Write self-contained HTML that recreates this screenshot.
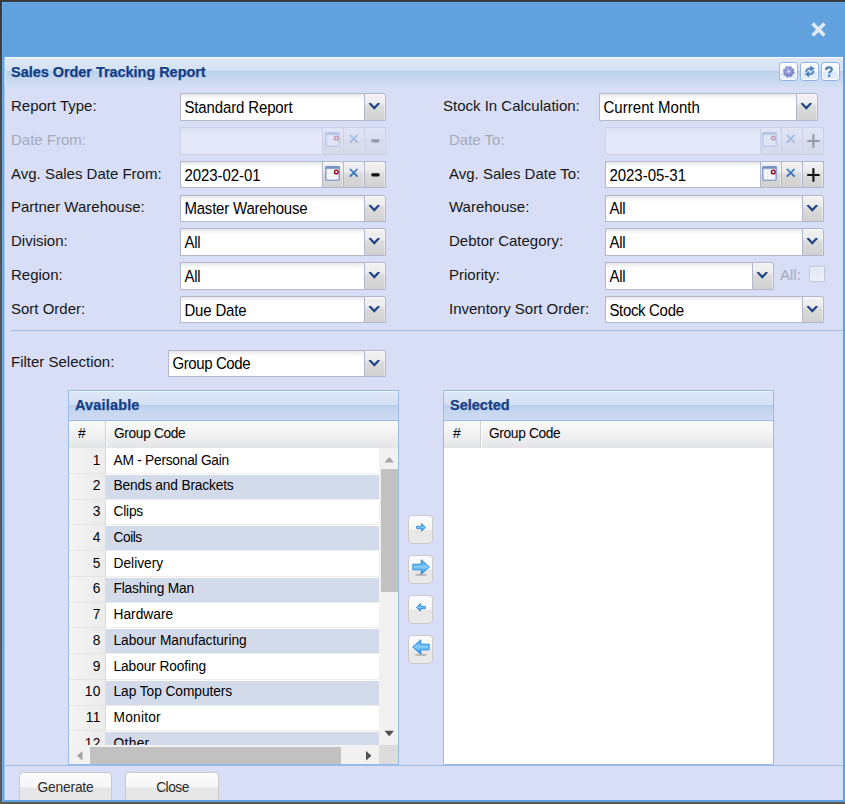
<!DOCTYPE html>
<html><head><meta charset="utf-8"><title>Sales Order Tracking Report</title>
<style>
*{box-sizing:border-box;margin:0;padding:0}
html,body{width:845px;height:804px;overflow:hidden;background:#3b3d40;font-family:"Liberation Sans",sans-serif;font-size:15px;color:#000}
#dark{position:absolute;left:0;top:0;width:845px;height:804px;background:linear-gradient(180deg,#37393c 0,#46484b 100px,#565757 300px,#5a5a58 100%)}
#win{position:absolute;left:2px;top:2px;width:843px;height:800px;background:#61a2de;border-top:1px solid #66abec;border-left:1px solid #66abec}
#bot{position:absolute;left:0;top:802px;width:845px;height:2px;background:#5a5a58}
#closex{position:absolute;left:811px;top:22px}
#panel{position:absolute;left:5px;top:57px;width:838px;height:743px;background:#d7def6;overflow:hidden;box-shadow:inset 1px 0 0 #dde3f8}
#phead{position:absolute;left:0;top:0;width:838px;height:30px;border-top:1px solid #fff;border-left:1px solid #dde7f6;background:linear-gradient(180deg,#dee8f6 0,#d4e1f3 13px,#b8cdec 13.2px,#c0d3ee 15px,#c8d8f0 22px,#d1dff3 29px)}
.ttl{position:absolute;font-weight:bold;color:#133e86;white-space:nowrap;font-size:14.5px;line-height:17px;-webkit-text-stroke:.25px #133e86}
.tool{position:absolute;top:4px;width:19px;height:19px;border:1px solid #8fb3e4;border-radius:3.5px;background:linear-gradient(180deg,#fdfeff 0,#f2f7fd 48%,#dbe9fa 52%,#e4effc 100%);box-shadow:inset 0 0 0 1px #fff}
.tool svg{position:absolute;left:0;top:0}
.lbl{position:absolute;white-space:nowrap;line-height:17px;font-size:15px;color:#161616}
.ldis{color:#a4aabb}
.fld{position:absolute;height:28px}
.h27,.h27 .inp,.h27 .trg{height:27px}
.inp{position:absolute;left:0;top:0;height:28px;border:1px solid #b5b8c8;background:linear-gradient(180deg,#e4e6e8 0,#f3f4f5 2.5px,#fdfdfd 5px,#fff 7px,#fff 100%);overflow:hidden;white-space:nowrap}
.inp span{position:absolute;left:3.4px;top:5px;line-height:17px;font-size:15px;color:#000;transform:scaleY(1.045);transform-origin:0 13.7px}
.trg{position:absolute;top:0;width:22px;height:28px;border:1px solid #b2b6cb;border-radius:0 3px 0 0;background:linear-gradient(180deg,#f2f2f2 0,#ececec 36%,#dbdbdb 48%,#d1d1d1 100%);box-shadow:inset -1px 1px 0 rgba(255,255,255,.45)}
.trg svg.chev{position:absolute;left:3px;top:8.3px}
.trg svg.ic{position:absolute}
.gd{position:absolute;right:-1px;top:-1px;width:1px;height:1px;background:#2be22b}
.dis{opacity:.33}
.sep{position:absolute;left:6px;top:273px;width:832px;height:1px;background:#9bbce9}
.gp{position:absolute;top:333px;width:331px;height:375px;border:1px solid #99bbe8;background:#fff;overflow:hidden}
.gph{position:absolute;left:0;top:0;width:100%;height:30px;border-bottom:1px solid #99bbe8;border-top:1px solid #edf3fb;background:linear-gradient(180deg,#dde7f6 0,#d3e0f3 13px,#b6cbeb 13.2px,#bfd2ee 15px,#c7d7f0 21px,#cfddf2 28px)}
.gch{position:absolute;left:0;top:30px;width:100%;height:27px;background:linear-gradient(180deg,#f9f9f9 0,#f2f2f3 50%,#e5e6e8 100%);border-bottom:1px solid #e3e4e6}
.gch div{position:absolute;top:4px;line-height:17px;white-space:nowrap;font-size:13.75px;transform:scaleY(1.05);transform-origin:0 13.2px}
.gch i{position:absolute;left:36px;top:0;width:2px;height:26px;border-left:1px solid #d0d0d0;border-right:1px solid #fcfcfc}
.rows{position:absolute;left:0;top:57px;width:310px;height:297px;overflow:hidden;background:#fff}
.row{position:absolute;left:0;width:310px;border-top:1px solid #fff;border-bottom:1px solid #ededed;background:#fff}
.row.alt{background:#d3dae9}
.num{position:absolute;left:0;top:-1px;bottom:-1px;width:37px;background:linear-gradient(90deg,#f4f4f4,#ececec);border-right:1px solid #dcdcdc;border-bottom:1px solid #e4e4e4;text-align:right;padding-right:4px;letter-spacing:.5px;line-height:17px;padding-top:4px;font-size:13.75px}
.cell{position:absolute;left:44.5px;top:3px;line-height:17px;white-space:nowrap;font-size:13.75px;transform:scaleY(1.05);transform-origin:0 13.2px}
.vsb{position:absolute;left:310px;top:57px;width:19px;height:297px;background:#f1f1f1}
.hsb{position:absolute;left:0;top:354px;width:310px;height:19px;background:#f1f1f1}
.corner{position:absolute;left:310px;top:354px;width:19px;height:19px;background:#dcdcdc}
.thumb{position:absolute;background:#c1c1c1}
.mv{position:absolute;left:403px;width:25px;height:29px;border:1px solid #cacaca;border-radius:4px;background:linear-gradient(180deg,#fcfcfc 0,#f7f7f7 13px,#e7e7e7 14px,#eaeaea 100%)}
.mv svg{position:absolute}
.foot{position:absolute;left:0;top:708px;width:838px;height:1px;background:#9bbce9}
.btn{position:absolute;top:715px;height:40px;border:1px solid #cacaca;border-radius:4px 4px 0 0;background:linear-gradient(180deg,#fcfcfc 0,#f6f6f6 14px,#e6e6e6 15px,#e9e9e9 100%);text-align:center;line-height:17px;padding-top:6px;color:#2a2a2a;font-size:13.75px;white-space:nowrap}
</style></head><body>
<div id="dark"></div>
<div id="win"></div>
<div id="bot"></div>
<div style="position:absolute;left:4px;top:57px;width:1px;height:743px;background:#a6c3ec"></div>
<svg id="closex" width="15" height="15" viewBox="0 0 15 15"><path d="M1.6 1.6L13.4 13.4M13.4 1.6L1.6 13.4" stroke="#e1eaf6" stroke-width="3.6" fill="none"/></svg>
<div id="panel">
<div id="phead"><div class="ttl" style="left:5px;top:6px"><span style="letter-spacing:-0.043px">Sales Order Tracking Report</span></div>
<div class="tool" style="left:773px"><svg width="18" height="18" viewBox="0 0 18 18"><defs><radialGradient id="gg" cx=".45" cy=".4" r=".62"><stop offset="0" stop-color="#abb3e2"/><stop offset=".55" stop-color="#8e97d2"/><stop offset="1" stop-color="#727cc0"/></radialGradient></defs><circle cx="8.7" cy="8.7" r="5" fill="none" stroke="#7b85c5" stroke-width="1.5" stroke-dasharray="2.3 1.63"/><circle cx="8.7" cy="8.7" r="4.9" fill="url(#gg)"/><circle cx="8.7" cy="8.7" r="0.95" fill="#fff"/></svg></div><div class="tool" style="left:794px"><svg width="18" height="18" viewBox="0 0 18 18"><g fill="none" stroke="#5c8bc0" stroke-width="2.1"><path d="M5.2 9.2C5.2 6.6 7 5.6 9 5.6H10"/><path d="M12.4 7.6C12.4 10.2 10.6 11.2 8.6 11.2H7.6"/></g><path d="M9.3 2.5L13.6 5.6L9.3 8.7Z" fill="#4f80b8"/><path d="M8.2 8.1L3.9 11.2L8.2 14.3Z" fill="#4f80b8"/></svg></div><div class="tool" style="left:815px"><svg width="18" height="18" viewBox="0 0 18 18"><g transform="matrix(0.88 0 0 0.84 -0.9 1.25)"><path d="M5.7 6.7C5.7 4.7 7.1 3.7 9 3.7C10.9 3.7 12.2 4.7 12.2 6.3C12.2 8.5 9.2 8.6 9.2 11.1" fill="none" stroke="#4f7fb8" stroke-width="2.5"/><rect x="7.9" y="12.3" width="2.6" height="2.8" fill="#4f7fb8"/></g></svg></div>
</div>
</div>
<div id="form">
<div class="lbl" style="left:11px;top:97px">Report Type:</div>
<div class="fld" style="left:180px;top:93px;width:205px"><div class="inp" style="width:185px"><span style="top:5px;letter-spacing:-0.134px">Standard Report</span></div><div class="trg" style="left:184px"><svg class="chev" width="13" height="9" viewBox="0 0 13 9"><path d="M0.5 1.4 L2.7 0.8 L6.3 4.4 L9.9 0.8 L12.1 1.4 L6.3 7.8 Z" fill="#1f4287"/></svg></div></div>
<div class="lbl ldis" style="left:11px;top:131px">Date From:</div>
<div class="fld dis" style="left:180px;top:127px;width:205px"><div class="inp" style="width:143px"></div><div class="trg" style="left:142px"><svg class="ic" style="left:1.8px;top:4px" width="15" height="15" viewBox="0 0 15 15"><rect x="0.75" y="0.75" width="13.5" height="13.5" rx="1.3" fill="#e7e9ee" stroke="#8aa3cf" stroke-width="1.5"/><path d="M1 0.3H14Q14.7 0.3 14.7 1V2.7H0.3V1Q0.3 0.3 1 0.3Z" fill="#7391c4"/><path d="M2.4 4.3h2.9v2.7h-2.9zM6.2 4.3h2.9v2.7h-2.9zM2.4 7.9h2.9v2.7h-2.9zM6.2 7.9h2.9v2.7h-2.9zM10 7.9h2.6v2.7h-2.6zM2.4 11.5h2.9v1.7h-2.9zM6.2 11.5h2.9v1.7h-2.9zM10 11.5h2.6v1.7h-2.6z" fill="#fdfdfe"/><circle cx="11.3" cy="6" r="1.85" fill="#fff" stroke="#9c1424" stroke-width="1.5"/></svg></div><div class="trg" style="left:163px"><svg class="ic" style="left:4.7px;top:6px" width="9.5" height="9.5" viewBox="0 0 10 10"><defs><linearGradient id="xg" x1="0" y1="0" x2="0" y2="1"><stop offset="0" stop-color="#4c8ad0"/><stop offset="1" stop-color="#2f68b0"/></linearGradient></defs><path d="M0.9 0.9L9.1 9.1M9.1 0.9L0.9 9.1" stroke="url(#xg)" stroke-width="2" fill="none"/></svg></div><div class="trg" style="left:184px"><svg class="ic" style="left:5.8px;top:11px" width="9" height="4" viewBox="0 0 9 4"><rect x="0.3" y="0.3" width="8.3" height="3.1" rx="1.3" fill="#141414"/></svg><b class="gd"></b></div></div>
<div class="lbl" style="left:11px;top:165px">Avg. Sales Date From:</div>
<div class="fld h27" style="left:180px;top:161px;width:205px"><div class="inp" style="width:143px"><span style="top:5px;letter-spacing:-0.059px">2023-02-01</span></div><div class="trg" style="left:142px"><svg class="ic" style="left:1.8px;top:4px" width="15" height="15" viewBox="0 0 15 15"><rect x="0.75" y="0.75" width="13.5" height="13.5" rx="1.3" fill="#e7e9ee" stroke="#8aa3cf" stroke-width="1.5"/><path d="M1 0.3H14Q14.7 0.3 14.7 1V2.7H0.3V1Q0.3 0.3 1 0.3Z" fill="#7391c4"/><path d="M2.4 4.3h2.9v2.7h-2.9zM6.2 4.3h2.9v2.7h-2.9zM2.4 7.9h2.9v2.7h-2.9zM6.2 7.9h2.9v2.7h-2.9zM10 7.9h2.6v2.7h-2.6zM2.4 11.5h2.9v1.7h-2.9zM6.2 11.5h2.9v1.7h-2.9zM10 11.5h2.6v1.7h-2.6z" fill="#fdfdfe"/><circle cx="11.3" cy="6" r="1.85" fill="#fff" stroke="#9c1424" stroke-width="1.5"/></svg></div><div class="trg" style="left:163px"><svg class="ic" style="left:4.7px;top:6px" width="9.5" height="9.5" viewBox="0 0 10 10"><defs><linearGradient id="xg" x1="0" y1="0" x2="0" y2="1"><stop offset="0" stop-color="#4c8ad0"/><stop offset="1" stop-color="#2f68b0"/></linearGradient></defs><path d="M0.9 0.9L9.1 9.1M9.1 0.9L0.9 9.1" stroke="url(#xg)" stroke-width="2" fill="none"/></svg></div><div class="trg" style="left:184px"><svg class="ic" style="left:5.8px;top:11px" width="9" height="4" viewBox="0 0 9 4"><rect x="0.3" y="0.3" width="8.3" height="3.1" rx="1.3" fill="#141414"/></svg><b class="gd"></b></div></div>
<div class="lbl" style="left:11px;top:198px">Partner Warehouse:</div>
<div class="fld h27" style="left:180px;top:195px;width:205px"><div class="inp" style="width:185px"><span style="top:4px;letter-spacing:-0.198px">Master Warehouse</span></div><div class="trg" style="left:184px"><svg class="chev" width="13" height="9" viewBox="0 0 13 9"><path d="M0.5 1.4 L2.7 0.8 L6.3 4.4 L9.9 0.8 L12.1 1.4 L6.3 7.8 Z" fill="#1f4287"/></svg></div></div>
<div class="lbl" style="left:11px;top:232px">Division:</div>
<div class="fld" style="left:180px;top:228px;width:205px"><div class="inp" style="width:185px"><span style="top:5px;letter-spacing:-0.236px">All</span></div><div class="trg" style="left:184px"><svg class="chev" width="13" height="9" viewBox="0 0 13 9"><path d="M0.5 1.4 L2.7 0.8 L6.3 4.4 L9.9 0.8 L12.1 1.4 L6.3 7.8 Z" fill="#1f4287"/></svg></div></div>
<div class="lbl" style="left:11px;top:266px">Region:</div>
<div class="fld" style="left:180px;top:262px;width:205px"><div class="inp" style="width:185px"><span style="top:5px;letter-spacing:-0.236px">All</span></div><div class="trg" style="left:184px"><svg class="chev" width="13" height="9" viewBox="0 0 13 9"><path d="M0.5 1.4 L2.7 0.8 L6.3 4.4 L9.9 0.8 L12.1 1.4 L6.3 7.8 Z" fill="#1f4287"/></svg></div></div>
<div class="lbl" style="left:11px;top:300px">Sort Order:</div>
<div class="fld h27" style="left:180px;top:296px;width:205px"><div class="inp" style="width:185px"><span style="top:5px;letter-spacing:-0.168px">Due Date</span></div><div class="trg" style="left:184px"><svg class="chev" width="13" height="9" viewBox="0 0 13 9"><path d="M0.5 1.4 L2.7 0.8 L6.3 4.4 L9.9 0.8 L12.1 1.4 L6.3 7.8 Z" fill="#1f4287"/></svg></div></div>
<div class="lbl" style="left:443px;top:97px">Stock In Calculation:</div>
<div class="fld" style="left:599px;top:93px;width:218px"><div class="inp" style="width:198px"><span style="top:5px;letter-spacing:0.052px">Current Month</span></div><div class="trg" style="left:197px"><svg class="chev" width="13" height="9" viewBox="0 0 13 9"><path d="M0.5 1.4 L2.7 0.8 L6.3 4.4 L9.9 0.8 L12.1 1.4 L6.3 7.8 Z" fill="#1f4287"/></svg></div></div>
<div class="lbl ldis" style="left:449px;top:131px">Date To:</div>
<div class="fld dis" style="left:605px;top:127px;width:218px"><div class="inp" style="width:156px"></div><div class="trg" style="left:155px"><svg class="ic" style="left:0.6px;top:4px" width="15" height="15" viewBox="0 0 15 15"><rect x="0.75" y="0.75" width="13.5" height="13.5" rx="1.3" fill="#e7e9ee" stroke="#8aa3cf" stroke-width="1.5"/><path d="M1 0.3H14Q14.7 0.3 14.7 1V2.7H0.3V1Q0.3 0.3 1 0.3Z" fill="#7391c4"/><path d="M2.4 4.3h2.9v2.7h-2.9zM6.2 4.3h2.9v2.7h-2.9zM2.4 7.9h2.9v2.7h-2.9zM6.2 7.9h2.9v2.7h-2.9zM10 7.9h2.6v2.7h-2.6zM2.4 11.5h2.9v1.7h-2.9zM6.2 11.5h2.9v1.7h-2.9zM10 11.5h2.6v1.7h-2.6z" fill="#fdfdfe"/><circle cx="11.3" cy="6" r="1.85" fill="#fff" stroke="#9c1424" stroke-width="1.5"/></svg></div><div class="trg" style="left:176px"><svg class="ic" style="left:3.6px;top:6px" width="9.5" height="9.5" viewBox="0 0 10 10"><defs><linearGradient id="xg" x1="0" y1="0" x2="0" y2="1"><stop offset="0" stop-color="#4c8ad0"/><stop offset="1" stop-color="#2f68b0"/></linearGradient></defs><path d="M0.9 0.9L9.1 9.1M9.1 0.9L0.9 9.1" stroke="url(#xg)" stroke-width="2" fill="none"/></svg></div><div class="trg" style="left:197px"><svg class="ic" style="left:3.6px;top:6px" width="13" height="14" viewBox="0 0 13 14"><path d="M6.4 0.2V13.8M0.2 7H12.6" stroke="#111" stroke-width="2.1" fill="none"/></svg><b class="gd"></b></div></div>
<div class="lbl" style="left:449px;top:165px">Avg. Sales Date To:</div>
<div class="fld h27" style="left:605px;top:161px;width:218px"><div class="inp" style="width:156px"><span style="top:5px;letter-spacing:-0.015px">2023-05-31</span></div><div class="trg" style="left:155px"><svg class="ic" style="left:0.6px;top:4px" width="15" height="15" viewBox="0 0 15 15"><rect x="0.75" y="0.75" width="13.5" height="13.5" rx="1.3" fill="#e7e9ee" stroke="#8aa3cf" stroke-width="1.5"/><path d="M1 0.3H14Q14.7 0.3 14.7 1V2.7H0.3V1Q0.3 0.3 1 0.3Z" fill="#7391c4"/><path d="M2.4 4.3h2.9v2.7h-2.9zM6.2 4.3h2.9v2.7h-2.9zM2.4 7.9h2.9v2.7h-2.9zM6.2 7.9h2.9v2.7h-2.9zM10 7.9h2.6v2.7h-2.6zM2.4 11.5h2.9v1.7h-2.9zM6.2 11.5h2.9v1.7h-2.9zM10 11.5h2.6v1.7h-2.6z" fill="#fdfdfe"/><circle cx="11.3" cy="6" r="1.85" fill="#fff" stroke="#9c1424" stroke-width="1.5"/></svg></div><div class="trg" style="left:176px"><svg class="ic" style="left:3.6px;top:6px" width="9.5" height="9.5" viewBox="0 0 10 10"><defs><linearGradient id="xg" x1="0" y1="0" x2="0" y2="1"><stop offset="0" stop-color="#4c8ad0"/><stop offset="1" stop-color="#2f68b0"/></linearGradient></defs><path d="M0.9 0.9L9.1 9.1M9.1 0.9L0.9 9.1" stroke="url(#xg)" stroke-width="2" fill="none"/></svg></div><div class="trg" style="left:197px"><svg class="ic" style="left:3.6px;top:6px" width="13" height="14" viewBox="0 0 13 14"><path d="M6.4 0.2V13.8M0.2 7H12.6" stroke="#111" stroke-width="2.1" fill="none"/></svg><b class="gd"></b></div></div>
<div class="lbl" style="left:449px;top:198px">Warehouse:</div>
<div class="fld h27" style="left:605px;top:195px;width:218px"><div class="inp" style="width:198px"><span style="top:4px;letter-spacing:-0.236px">All</span></div><div class="trg" style="left:197px"><svg class="chev" width="13" height="9" viewBox="0 0 13 9"><path d="M0.5 1.4 L2.7 0.8 L6.3 4.4 L9.9 0.8 L12.1 1.4 L6.3 7.8 Z" fill="#1f4287"/></svg></div></div>
<div class="lbl" style="left:449px;top:232px">Debtor Category:</div>
<div class="fld" style="left:605px;top:228px;width:218px"><div class="inp" style="width:198px"><span style="top:5px;letter-spacing:-0.236px">All</span></div><div class="trg" style="left:197px"><svg class="chev" width="13" height="9" viewBox="0 0 13 9"><path d="M0.5 1.4 L2.7 0.8 L6.3 4.4 L9.9 0.8 L12.1 1.4 L6.3 7.8 Z" fill="#1f4287"/></svg></div></div>
<div class="lbl" style="left:449px;top:266px">Priority:</div>
<div class="fld" style="left:605px;top:262px;width:168px"><div class="inp" style="width:148px"><span style="top:5px;letter-spacing:-0.236px">All</span></div><div class="trg" style="left:147px"><svg class="chev" width="13" height="9" viewBox="0 0 13 9"><path d="M0.5 1.4 L2.7 0.8 L6.3 4.4 L9.9 0.8 L12.1 1.4 L6.3 7.8 Z" fill="#1f4287"/></svg></div></div>
<div class="lbl" style="left:449px;top:300px">Inventory Sort Order:</div>
<div class="fld h27" style="left:605px;top:296px;width:218px"><div class="inp" style="width:198px"><span style="top:5px;letter-spacing:-0.327px">Stock Code</span></div><div class="trg" style="left:197px"><svg class="chev" width="13" height="9" viewBox="0 0 13 9"><path d="M0.5 1.4 L2.7 0.8 L6.3 4.4 L9.9 0.8 L12.1 1.4 L6.3 7.8 Z" fill="#1f4287"/></svg></div></div>
<div class="lbl" style="left:780px;top:266px;color:#a4aabb">All:</div>
<div style="position:absolute;left:809px;top:266px;width:16px;height:16px;box-shadow:inset 0 0 0 1px #eef0f9;border:1px solid #c2c6d5;background:linear-gradient(180deg,#e2e6f3,#eceffa);border-radius:1px"></div>
<div class="lbl" style="left:11px;top:353px">Filter Selection:</div>
<div class="fld h27" style="left:168px;top:350px;width:217px"><div class="inp" style="width:197px"><span style="top:4px;letter-spacing:-0.391px">Group Code</span></div><div class="trg" style="left:196px"><svg class="chev" width="13" height="9" viewBox="0 0 13 9"><path d="M0.5 1.4 L2.7 0.8 L6.3 4.4 L9.9 0.8 L12.1 1.4 L6.3 7.8 Z" fill="#1f4287"/></svg></div></div>
</div>
<div id="panel2" style="position:absolute;left:5px;top:57px;width:838px;height:743px;overflow:hidden">
<div class="sep"></div>
<div class="gp" style="left:63px">
 <div class="gph"><div class="ttl" style="left:6px;top:5px"><span style="letter-spacing:0.157px">Available</span></div></div>
 <div class="gch"><div style="left:9px">#</div><i></i><div style="left:45px"><span style="letter-spacing:-0.358px">Group Code</span></div></div>
 <div class="rows">
<div class="row" style="top:0px;height:26px"><div class="num">1</div><div class="cell"><span style="letter-spacing:-0.252px">AM - Personal Gain</span></div></div>
<div class="row alt" style="top:26px;height:26px"><div class="num" style="padding-top:3px">2</div><div class="cell" style="top:2px"><span style="letter-spacing:-0.168px">Bends and Brackets</span></div></div>
<div class="row" style="top:52px;height:25px"><div class="num" style="padding-top:3.4px">3</div><div class="cell" style="top:2.4px"><span style="letter-spacing:-0.216px">Clips</span></div></div>
<div class="row alt" style="top:77px;height:26px"><div class="num" style="padding-top:3.6px">4</div><div class="cell" style="top:2.6px"><span style="letter-spacing:-0.466px">Coils</span></div></div>
<div class="row" style="top:103px;height:26px"><div class="num">5</div><div class="cell"><span style="letter-spacing:0.004px">Delivery</span></div></div>
<div class="row alt" style="top:129px;height:26px"><div class="num" style="padding-top:3.4px">6</div><div class="cell" style="top:2.4px"><span style="letter-spacing:-0.168px">Flashing Man</span></div></div>
<div class="row" style="top:155px;height:25px"><div class="num" style="padding-top:3px">7</div><div class="cell" style="top:2px"><span style="letter-spacing:0.013px">Hardware</span></div></div>
<div class="row alt" style="top:180px;height:26px"><div class="num">8</div><div class="cell"><span style="letter-spacing:-0.031px">Labour Manufacturing</span></div></div>
<div class="row" style="top:206px;height:26px"><div class="num">9</div><div class="cell"><span style="letter-spacing:-0.102px">Labour Roofing</span></div></div>
<div class="row alt" style="top:232px;height:26px"><div class="num" style="padding-top:3px">10</div><div class="cell" style="top:2px"><span style="letter-spacing:-0.066px">Lap Top Computers</span></div></div>
<div class="row" style="top:258px;height:25px"><div class="num" style="padding-top:3px">11</div><div class="cell" style="top:2px"><span style="letter-spacing:0.223px">Monitor</span></div></div>
<div class="row alt" style="top:283px;height:26px"><div class="num">12</div><div class="cell"><span style="letter-spacing:0.327px">Other</span></div></div>
 </div>
 <div class="vsb"><svg width="19" height="297" style="position:absolute;left:0;top:0"><path d="M5.5 14.5L10.2 9L15 14.5Z" fill="#a3a3a3"/><path d="M5.5 282.8L10.2 288.3L15 282.8Z" fill="#505050"/></svg><div class="thumb" style="left:2px;top:21px;width:17px;height:123px"></div></div>
 <div class="hsb"><svg width="310" height="19" style="position:absolute;left:0;top:0"><path d="M13.5 6L8 10.7L13.5 15.4Z" fill="#a3a3a3"/><path d="M297 6L302.5 10.7L297 15.4Z" fill="#505050"/></svg><div class="thumb" style="left:21px;top:2px;width:251px;height:17px"></div></div>
 <div class="corner"></div>
</div>
<div class="mv" style="top:458px"><svg style="left:7px;top:7px" width="10" height="9" viewBox="0 0 10 9"><defs><linearGradient id="ag" x1="0" y1="0" x2="0" y2="1"><stop offset="0" stop-color="#3397e8"/><stop offset=".3" stop-color="#62baf6"/><stop offset=".5" stop-color="#84cdfb"/><stop offset=".7" stop-color="#55b0f3"/><stop offset="1" stop-color="#1f86e0"/></linearGradient></defs><g><path d="M0.6 3.4H5.6V0.7L9.6 4.4L5.6 8.1V5.4H0.6Z" fill="url(#ag)" stroke="#2a86dc" stroke-width="0.9" stroke-linejoin="round"/></g></svg></div>
<div class="mv" style="top:498px"><svg style="left:3px;top:3px" width="18" height="17" viewBox="0 0 18 17"><defs><linearGradient id="ag" x1="0" y1="0" x2="0" y2="1"><stop offset="0" stop-color="#3397e8"/><stop offset=".3" stop-color="#62baf6"/><stop offset=".5" stop-color="#84cdfb"/><stop offset=".7" stop-color="#55b0f3"/><stop offset="1" stop-color="#1f86e0"/></linearGradient></defs><ellipse cx="9" cy="15.8" rx="6.5" ry="1.2" fill="#9a9a9a" opacity=".6"/><g><path d="M0.8 5.2H9.2V0.8L17.4 8L9.2 15.2V10.8H0.8Z" fill="url(#ag)" stroke="#2a86dc" stroke-width="0.9" stroke-linejoin="round"/></g></svg></div>
<div class="mv" style="top:538px"><svg style="left:7px;top:7px" width="10" height="9" viewBox="0 0 10 9"><defs><linearGradient id="ag" x1="0" y1="0" x2="0" y2="1"><stop offset="0" stop-color="#3397e8"/><stop offset=".3" stop-color="#62baf6"/><stop offset=".5" stop-color="#84cdfb"/><stop offset=".7" stop-color="#55b0f3"/><stop offset="1" stop-color="#1f86e0"/></linearGradient></defs><g transform="translate(10,0) scale(-1,1)"><path d="M0.6 3.4H5.6V0.7L9.6 4.4L5.6 8.1V5.4H0.6Z" fill="url(#ag)" stroke="#2a86dc" stroke-width="0.9" stroke-linejoin="round"/></g></svg></div>
<div class="mv" style="top:578px"><svg style="left:3px;top:3px" width="18" height="17" viewBox="0 0 18 17"><defs><linearGradient id="ag" x1="0" y1="0" x2="0" y2="1"><stop offset="0" stop-color="#3397e8"/><stop offset=".3" stop-color="#62baf6"/><stop offset=".5" stop-color="#84cdfb"/><stop offset=".7" stop-color="#55b0f3"/><stop offset="1" stop-color="#1f86e0"/></linearGradient></defs><ellipse cx="9" cy="15.8" rx="6.5" ry="1.2" fill="#9a9a9a" opacity=".6"/><g transform="translate(18,0) scale(-1,1)"><path d="M0.8 5.2H9.2V0.8L17.4 8L9.2 15.2V10.8H0.8Z" fill="url(#ag)" stroke="#2a86dc" stroke-width="0.9" stroke-linejoin="round"/></g></svg></div>
<div class="gp" style="left:438px">
 <div class="gph"><div class="ttl" style="left:6px;top:5px"><span style="letter-spacing:0.006px">Selected</span></div></div>
 <div class="gch"><div style="left:9px">#</div><i></i><div style="left:45px"><span style="letter-spacing:-0.358px">Group Code</span></div></div>
</div>
<div class="foot"></div>
<div class="btn" style="left:14px;width:93px"><span style="letter-spacing:-0.163px">Generate</span></div>
<div class="btn" style="left:120px;width:94px;padding-left:1px"><span style="letter-spacing:-0.489px">Close</span></div>
</div>
</body></html>
